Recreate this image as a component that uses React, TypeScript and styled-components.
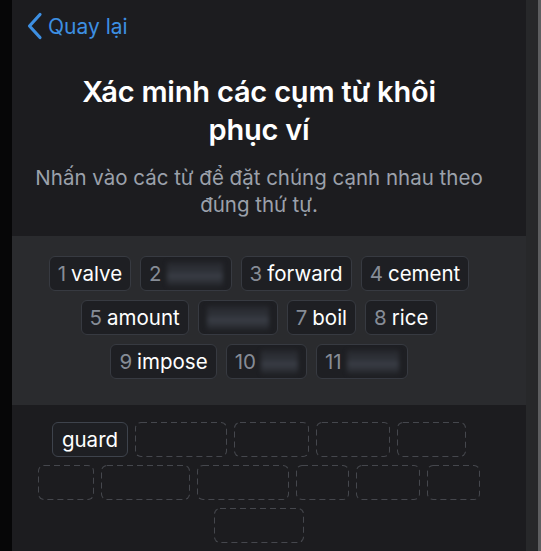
import styled, { createGlobalStyle } from "styled-components";

const Global = createGlobalStyle`
  html, body { margin: 0; padding: 0; background: #060607; }
  body { font-family: Inter, "Liberation Sans", sans-serif; -webkit-font-smoothing: antialiased; }
`;

type Word = { n: number; word?: string; hiddenWidth?: number; hideNumber?: boolean };

const bank: Word[] = [
  { n: 1, word: "valve" },
  { n: 2, hiddenWidth: 56 },
  { n: 3, word: "forward" },
  { n: 4, word: "cement" },
  { n: 5, word: "amount" },
  { n: 6, hiddenWidth: 62, hideNumber: true },
  { n: 7, word: "boil" },
  { n: 8, word: "rice" },
  { n: 9, word: "impose" },
  { n: 10, hiddenWidth: 37 },
  { n: 11, hiddenWidth: 52 },
];

// empty drop targets after the one already filled with "guard"
const slotWidths = [92, 75, 74, 69, 56, 89, 92, 53, 64, 53, 90];

const dash = encodeURIComponent(
  "<svg xmlns='http://www.w3.org/2000/svg' width='100%' height='100%'><rect width='100%' height='100%' rx='6' fill='none' stroke='#45474d' stroke-width='2' stroke-dasharray='6 4'/></svg>"
);

const Frame = styled.div`
  display: flex; height: 551px; overflow: hidden;
`;
const LeftEdge = styled.div` width: 12px; background: #060607; flex: none; `;
const RightEdge = styled.div`
  width: 12px; flex: none; background: #27282a; border-right: 3px solid #5d5e60;
`;
const Screen = styled.div`
  flex: 1; background: #1c1c1f; display: flex; flex-direction: column; color: #fff;
`;
const NavBar = styled.div`
  height: 52px; display: flex; align-items: center; padding-left: 14px; padding-bottom: 2px;
`;
const Back = styled.button`
  display: flex; align-items: center; gap: 5px; background: none; border: 0; padding: 0;
  color: #3d8fe2; font: 400 21px Inter, "Liberation Sans", sans-serif; cursor: pointer;
`;
const Head = styled.div`
  display: flex; flex-direction: column; align-items: center; text-align: center;
  padding: 19px 28px 0 8px;
`;
const Title = styled.h1`
  margin: 0; font-size: 29px; line-height: 38px; font-weight: 600; letter-spacing: -0.2px;
  max-width: 380px;
`;
const Subtitle = styled.p`
  margin: 15px 0 0; font-size: 20.5px; line-height: 27px; color: #9ba1ab; max-width: 460px;
`;
const Bank = styled.div`
  margin-top: 18px; background: #2a2b2e; padding: 20px 20px 26px 0;
  display: flex; justify-content: center;
`;
const Wrap = styled.div<{ $w: number; $row: number; $col: number }>`
  width: ${(p) => p.$w}px; display: flex; flex-wrap: wrap; justify-content: center;
  row-gap: ${(p) => p.$row}px; column-gap: ${(p) => p.$col}px;
`;
const Chip = styled.div`
  height: 35px; box-sizing: border-box; padding: 0 8px; display: flex; align-items: center; gap: 5px;
  background: #1e1f23; border: 1px solid #373a41; border-radius: 6px; font-size: 20.5px;
`;
const Num = styled.span` color: #868c96; `;
const Blur = styled.span<{ $w: number }>`
  width: ${(p) => p.$w}px; height: 24px; border-radius: 3px;
  background: linear-gradient(180deg, #26282d 0%, #30333a 45%, #3b3f47 55%, #24262b 100%);
  filter: blur(2px);
`;
const Answer = styled.div`
  padding: 17px 20px 0 0; display: flex; justify-content: center;
`;
const Filled = styled.div`
  height: 35px; box-sizing: border-box; border-radius: 6px; display: flex; align-items: center;
  padding: 0 9px; font-size: 20.5px; border: 1px solid #3e434c; background: #1e1f23;
`;
const Slot = styled.div<{ $w: number }>`
  width: ${(p) => p.$w}px; height: 35px; border-radius: 6px;
  background-image: url("data:image/svg+xml,${dash}");
`;

function Chevron() {
  return (
    <svg width="17" height="28" viewBox="0 0 17 28" fill="none">
      <path d="M14 2.5 L3.5 14 L14 25.5" stroke="#3d8fe2" strokeWidth="3.2" strokeLinecap="round" strokeLinejoin="round" />
    </svg>
  );
}

export default function App() {
  return (
    <>
      <Global />
      <Frame>
        <LeftEdge />
        <Screen>
          <NavBar>
            <Back>
              <Chevron />
              Quay lại
            </Back>
          </NavBar>
          <Head>
            <Title>Xác minh các cụm từ khôi phục ví</Title>
            <Subtitle>Nhấn vào các từ để đặt chúng cạnh nhau theo đúng thứ tự.</Subtitle>
          </Head>
          <Bank>
            <Wrap $w={440} $row={9} $col={9}>
              {bank.map((w) => (
                <Chip key={w.n}>
                  {!w.hideNumber && <Num>{w.n}</Num>}
                  {w.word ? <span>{w.word}</span> : <Blur $w={w.hiddenWidth ?? 50} />}
                </Chip>
              ))}
            </Wrap>
          </Bank>
          <Answer>
            <Wrap $w={460} $row={8} $col={7}>
              <Filled>guard</Filled>
              {slotWidths.map((w, i) => (
                <Slot key={i} $w={w} />
              ))}
            </Wrap>
          </Answer>
        </Screen>
        <RightEdge />
      </Frame>
    </>
  );
}
